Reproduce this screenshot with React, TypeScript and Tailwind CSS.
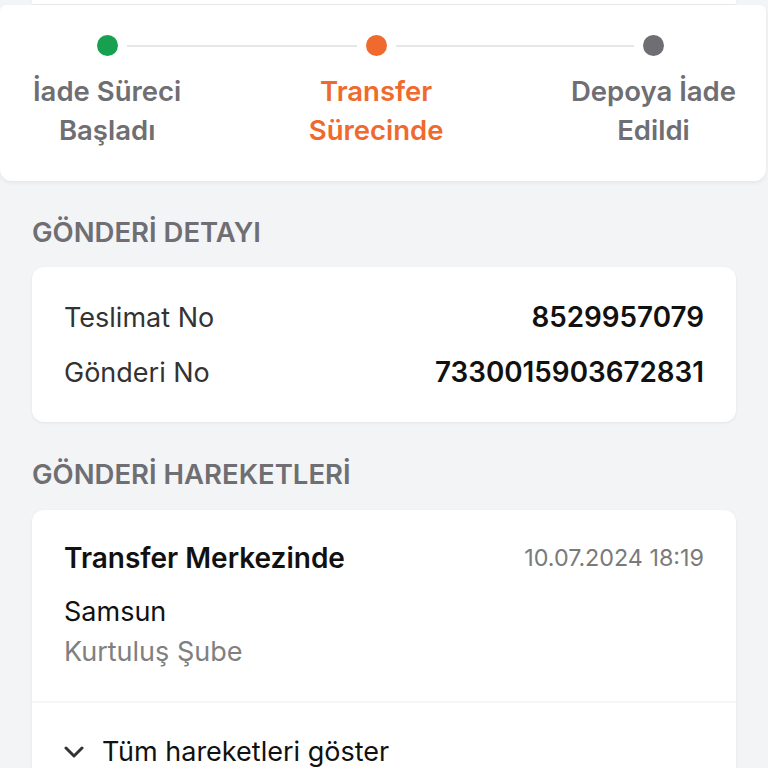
import React from 'react';

const steps = [
  { label: ['İade Süreci', 'Başladı'], color: 'text-[#6e6e73]' },
  { label: ['Transfer', 'Sürecinde'], color: 'text-[#ef6a2c]' },
  { label: ['Depoya İade', 'Edildi'], color: 'text-[#6e6e73]' },
];

export default function App() {
  return (
    <div className="min-h-screen w-[768px] overflow-hidden bg-[#f3f4f6] font-['Inter',sans-serif]">
      {/* previous card peeking out at the top */}
      <div className="mx-8 h-[4px] bg-white shadow-[0_1px_3px_rgba(0,0,0,0.08)]" />

      {/* Stepper */}
      <div className="mr-[2px] mt-[1px] rounded-b-xl rounded-t-md bg-white pb-[31px] pt-[30px] shadow-[0_2px_4px_rgba(0,0,0,0.06)]">
        <div className="flex items-center pl-[97px]">
          <div className="h-[21px] w-[21px] rounded-full bg-[#17a04f]" />
          <div className="mx-[9px] h-[2px] w-[230px] bg-[#e5e7eb]" />
          <div className="h-[21px] w-[21px] rounded-full bg-[#ef6a2c]" />
          <div className="mx-[9px] h-[2px] w-[238px] bg-[#e5e7eb]" />
          <div className="h-[21px] w-[21px] rounded-full bg-[#6e6e73]" />
        </div>
        <div className="mt-[16px] flex justify-between pl-[33px] pr-[30px]">
          {steps.map((s) => (
            <div
              key={s.label[0]}
              className={`flex flex-col items-center text-[27.5px] font-semibold leading-[39px] ${s.color}`}
            >
              <span>{s.label[0]}</span>
              <span>{s.label[1]}</span>
            </div>
          ))}
        </div>
      </div>

      {/* Gönderi detayı */}
      <div className="px-8">
        <h2 className="mt-[33px] text-[27.5px] font-semibold leading-[36px] text-[#6e6e73]">GÖNDERİ DETAYI</h2>
        <div className="mt-[17px] rounded-xl bg-white px-8 pb-[22px] pt-[23px] shadow-[0_1px_3px_rgba(0,0,0,0.07)]">
          <div className="flex items-center justify-between leading-[55px]">
            <span className="text-[27px] text-[#333333]">Teslimat No</span>
            <span className="text-[27.8px] font-semibold text-[#111111]">8529957079</span>
          </div>
          <div className="flex items-center justify-between leading-[55px]">
            <span className="text-[27px] text-[#333333]">Gönderi No</span>
            <span className="text-[27.8px] font-semibold text-[#111111]">7330015903672831</span>
          </div>
        </div>

        <h2 className="mt-[34px] text-[27.5px] font-semibold leading-[36px] text-[#6e6e73]">GÖNDERİ HAREKETLERİ</h2>
        <div className="mt-[18px] rounded-t-xl bg-white shadow-[0_1px_3px_rgba(0,0,0,0.07)]">
          <div className="px-8 pb-[29px] pt-[29px]">
            <div className="flex items-center justify-between">
              <span className="text-[28px] font-semibold leading-[38px] text-[#111111]">Transfer Merkezinde</span>
              <span className="text-[23.3px] leading-[38px] text-[#7a7a7a]">10.07.2024 18:19</span>
            </div>
            <div className="mt-[15px] text-[27px] leading-[40px] text-[#111111]">Samsun</div>
            <div className="text-[27px] leading-[40px] text-[#808080]">Kurtuluş Şube</div>
          </div>
          <div className="h-[2px] bg-[#f5f6f8]" />
          <div className="flex items-center gap-[18px] px-8 pb-6 pt-[29px]">
            <svg width="20" height="12" viewBox="0 0 20 12" fill="none" className="text-[#333333]">
              <path d="M2 2 L10 10 L18 2" stroke="currentColor" strokeWidth="3" strokeLinecap="round" strokeLinejoin="round" />
            </svg>
            <span className="text-[27px] leading-[40px] text-[#111111]">Tüm hareketleri göster</span>
          </div>
        </div>
      </div>
    </div>
  );
}
